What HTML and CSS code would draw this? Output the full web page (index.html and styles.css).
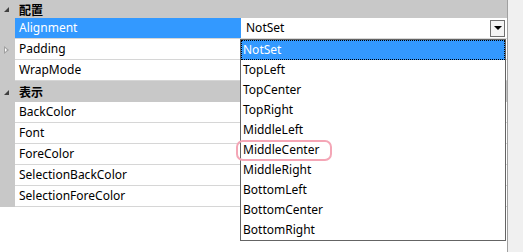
FILE: index.html
```html
<!DOCTYPE html>
<html lang="ja">

  <head>
    <meta charset="UTF-8">
    <meta name="viewport" content="width=device-width, initial-scale=1.0">
    <title>Property Grid</title>
    <link rel="stylesheet" href="styles.css">
  </head>

  <body>
    <div class="page">
      <div class="grid">
        <div class="cat first">
          <span class="gutter"><span class="expanded"></span></span>
          <span class="cat-label">配置</span>
        </div>
        <div class="row selected">
          <span class="gutter"></span>
          <span class="name">Alignment</span>
          <span class="value">
            NotSet
            <span class="drop-btn"><span class="arrow"></span></span>
          </span>
        </div>
        <div class="row">
          <span class="gutter"><span class="collapsed"></span></span>
          <span class="name">Padding</span>
          <span class="value"></span>
        </div>
        <div class="row">
          <span class="gutter"></span>
          <span class="name">WrapMode</span>
          <span class="value"></span>
        </div>
        <div class="cat">
          <span class="gutter"><span class="expanded"></span></span>
          <span class="cat-label">表示</span>
        </div>
        <div class="row">
          <span class="gutter"></span>
          <span class="name">BackColor</span>
          <span class="value"></span>
        </div>
        <div class="row">
          <span class="gutter"></span>
          <span class="name">Font</span>
          <span class="value"></span>
        </div>
        <div class="row">
          <span class="gutter"></span>
          <span class="name">ForeColor</span>
          <span class="value"></span>
        </div>
        <div class="row">
          <span class="gutter"></span>
          <span class="name">SelectionBackColor</span>
          <span class="value"></span>
        </div>
        <div class="row">
          <span class="gutter"></span>
          <span class="name">SelectionForeColor</span>
          <span class="value"></span>
        </div>
      </div>
      <div class="strip"></div>

      <ul class="dropdown">
        <li class="active">NotSet</li>
        <li>TopLeft</li>
        <li>TopCenter</li>
        <li>TopRight</li>
        <li>MiddleLeft</li>
        <li class="marked">MiddleCenter</li>
        <li>MiddleRight</li>
        <li>BottomLeft</li>
        <li>BottomCenter</li>
        <li>BottomRight</li>
      </ul>
    </div>
  </body>

</html>
```

FILE: styles.css
```css
:root {
  --gray: #c8c8c8;
  --line: #d6d6d6;
  --blue: #3399ff;
  --strip: #f0f0f0;
}

body {
  margin: 0;
  font-family: "Noto Sans", "Noto Sans CJK JP", sans-serif;
  font-size: 12px;
  color: #000;
  background: #fff;
}

.page {
  position: relative;
  display: flex;
  width: 523px;
  height: 252px;
}

.grid {
  width: 507px;
  display: flex;
  flex-direction: column;
  align-self: flex-start;
}

.strip {
  flex: 1;
  background: var(--strip);
  border-left: 1px solid #a0a0a0;
}

.cat {
  display: flex;
  align-items: center;
  height: 21px;
  background: var(--gray);
}

.cat.first {
  height: 18px;
}

.cat-label {
  padding-left: 4px;
  font-weight: bold;
  font-family: "Noto Sans CJK JP", sans-serif;
  font-size: 12px;
}

.row {
  display: flex;
  height: 20px;
  border-bottom: 1px solid var(--line);
  line-height: 20px;
}

.gutter {
  width: 15px;
  flex: none;
  align-self: stretch;
  background: var(--gray);
  display: flex;
  align-items: center;
  justify-content: center;
  margin-bottom: -1px;
}

.name {
  width: 221px;
  padding-left: 4px;
  border-right: 1px solid var(--line);
  white-space: nowrap;
}

.value {
  flex: 1;
  padding-left: 5px;
  display: flex;
  align-items: center;
  justify-content: space-between;
  padding-right: 2px;
}

.row.selected .name {
  background: var(--blue);
  color: #fff;
  border-right-color: var(--blue);
}

.expanded {
  width: 0;
  height: 0;
  border-left: 5px solid transparent;
  border-bottom: 5px solid #404040;
  margin-left: -2px;
}

.collapsed {
  width: 0;
  height: 0;
  border-top: 4px solid transparent;
  border-bottom: 4px solid transparent;
  border-left: 5px solid #a0a0a0;
  margin-left: -2px;
  position: relative;
}

.collapsed::after {
  content: "";
  position: absolute;
  left: -4px;
  top: -2px;
  border-top: 2px solid transparent;
  border-bottom: 2px solid transparent;
  border-left: 2px solid #fff;
}

.drop-btn {
  width: 15px;
  height: 17px;
  border: 1px solid #707070;
  background: #f4f4f4;
  display: flex;
  align-items: center;
  justify-content: center;
  box-sizing: border-box;
}

.arrow {
  width: 0;
  height: 0;
  border-left: 4px solid transparent;
  border-right: 4px solid transparent;
  border-top: 4px solid #000;
}

.dropdown {
  position: absolute;
  left: 240px;
  top: 39px;
  width: 264px;
  margin: 0;
  padding: 0;
  list-style: none;
  background: #fff;
  border: 1px solid #646464;
}

.dropdown li {
  position: relative;
  height: 20px;
  line-height: 20px;
  padding-left: 2px;
}

.dropdown li.active {
  background: var(--blue);
  color: #fff;
  outline: 1px dotted #000;
  outline-offset: -1px;
}

.dropdown li.marked::before {
  content: "";
  position: absolute;
  left: -5px;
  top: 0;
  width: 92px;
  height: 17px;
  border: 2px solid #f4a6b6;
  border-radius: 7px;
}
```
